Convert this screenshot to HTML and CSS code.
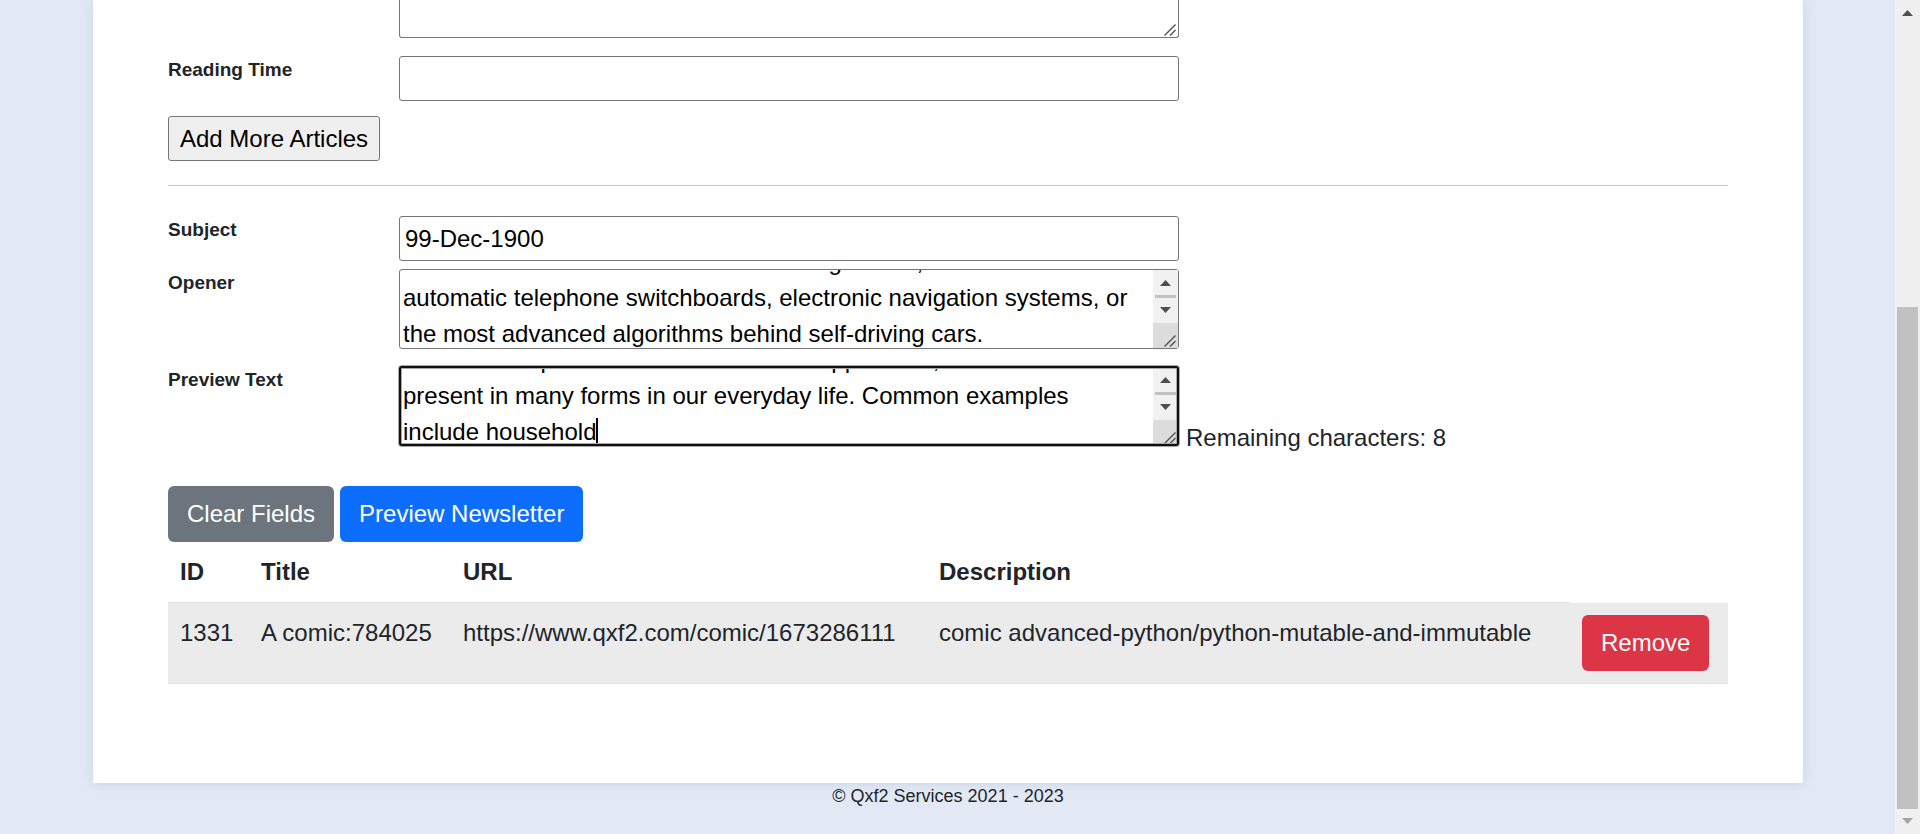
FILE: index.html
```html
<!DOCTYPE html>
<html lang="en">
<head>
<meta charset="utf-8">
<title>Newsletter Generator</title>
<link rel="stylesheet" href="styles.css">
</head>
<body>
<svg class="defs" aria-hidden="true">
  <symbol id="grip" viewBox="0 0 12 12"><path d="M0.5 11.5 11.5 0.5M6 11.5 11.5 6" fill="none" stroke="#505050" stroke-width="1.4"/></symbol>
  <symbol id="bar" viewBox="0 0 25 78">
    <path fill="#f1f1f1" d="M0 0h25v53H0z"/>
    <path fill="#dcdcdc" d="M0 53h25v25H0z"/>
    <path fill="#505050" d="M12.5 10 18 16H7zM7 37h11l-5.500 6z"/>
    <path fill="#c1c1c1" d="M2 25h21v3H2z"/>
    <path d="M11.500 76.500 22.500 65.500M17 76.500 22.500 71" fill="none" stroke="#505050" stroke-width="1.4"/>
  </symbol>
</svg>
<div class="page">
  <main class="card">
    <form>
      <div class="row row-first">
        <span class="label"></span>
        <div class="control">
          <textarea class="field field-cut" aria-label="Description"></textarea>
          <svg class="grip"><use href="#grip"/></svg>
        </div>
      </div>
      <div class="row row-reading">
        <label class="label" for="reading">Reading Time</label>
        <div class="control"><input class="field" type="text" id="reading"></div>
      </div>
      <button class="add" type="button">Add More Articles</button>
      <hr class="rule">
      <div class="row row-subject">
        <label class="label" for="subject">Subject</label>
        <div class="control"><input class="field" type="text" id="subject" value="99-Dec-1900"></div>
      </div>
      <div class="row row-opener">
        <label class="label" for="opener">Opener</label>
        <div class="control">
          <textarea class="field area" id="opener" data-rest="7">Common examples
include all household items such as refrigerators, thermostats and automatic telephone switchboards, electronic navigation systems, or the most advanced algorithms behind self-driving cars.</textarea>
          <svg class="bar"><use href="#bar"/></svg>
        </div>
      </div>
      <div class="row row-preview">
        <label class="label" for="preview">Preview Text</label>
        <div class="control">
          <textarea class="field area area-active" id="preview" data-rest="8">Automation
Besides computers and the household appliances, automation is present in many forms in our everyday life. Common examples include household</textarea>
          <svg class="bar"><use href="#bar"/></svg>
          <span class="caret"></span>
          <span class="ring"></span>
        </div>
        <span class="counter">Remaining characters: 8</span>
      </div>
      <div class="actions">
        <button class="btn btn-clear" type="button">Clear Fields</button>
        <button class="btn btn-preview" type="button">Preview Newsletter</button>
      </div>
    </form>
    <table class="articles">
      <colgroup><col class="c-id"><col class="c-title"><col class="c-url"><col class="c-desc"><col></colgroup>
      <thead>
        <tr><th>ID</th><th>Title</th><th>URL</th><th>Description</th></tr>
      </thead>
      <tbody>
        <tr>
          <td>1331</td><td>A comic:784025</td><td>https://www.qxf2.com/comic/1673286111</td>
          <td>comic advanced-python/python-mutable-and-immutable</td>
          <td><button class="btn btn-remove" type="button">Remove</button></td>
        </tr>
      </tbody>
    </table>
  </main>
  <footer class="footer">© Qxf2 Services 2021 - 2023</footer>
</div>
<div class="scroll" aria-hidden="true">
  <svg class="arrow" viewBox="0 0 11 6"><path fill="#505050" d="M5.500 0 11 6H0z"/></svg>
  <div class="track"><div class="thumb"></div></div>
  <svg class="arrow" viewBox="0 0 11 6"><path fill="#a3a3a3" d="M0 0h11L5.500 6z"/></svg>
</div>
<script src="script.js"></script>
</body>
</html>
```
FILE: styles.css
```css
* { box-sizing: border-box; }

body {
  margin: 0;
  display: flex;
  height: 100vh;
  overflow: hidden;
  background: #e2e9f4;
  color: #212529;
  font: 24px/36px "Liberation Sans", Arial, sans-serif;
}

.defs { position: absolute; width: 0; height: 0; }

.page { flex: 1; min-width: 0; padding: 0 92px 0 93px; }

.card {
  padding: 0 75px 99px;
  background: #fff;
  box-shadow: 0 0 10px rgba(130, 155, 205, 0.3);
}

.row { display: flex; align-items: flex-start; }
.row-reading { margin: 18px 0 15px; }
.row-subject { margin-bottom: 8px; }
.row-opener { margin-bottom: 17px; }
.row-preview { min-height: 90px; margin-bottom: 30px; }

.label {
  flex: 0 0 231px;
  font-size: 19px;
  line-height: 28px;
  font-weight: bold;
}

.control { position: relative; flex: 0 0 50%; display: flex; }

.field {
  width: 100%;
  height: 45px;
  margin: 0;
  padding: 2px 5px;
  border: 1px solid #767676;
  border-radius: 3px;
  background: #fff;
  color: #000;
  font: inherit;
  resize: none;
}
.field-cut { height: 38px; border-top: 0; border-radius: 0 0 3px 3px; overflow: hidden; }
.area { height: 80px; padding: 3px 28px 3px 3px; overflow: hidden; }
.area-active { outline: none; }

.bar { position: absolute; top: 1px; right: 1px; width: 25px; height: 78px; }
.grip { position: absolute; right: 3px; bottom: 2px; width: 12px; height: 12px; }
.ring {
  position: absolute;
  inset: 0;
  border: 2px solid #101010;
  border-radius: 3px;
  box-shadow: 0 0 0 1px #a8a8a8, inset 0 0 0 1px #a8a8a8;
  pointer-events: none;
}
.caret { position: absolute; left: 197px; top: 52px; width: 2px; height: 26px; background: #000; }

.counter { align-self: flex-end; margin-left: 7px; }

.add {
  display: block;
  height: 45px;
  padding: 0 11px;
  border: 1px solid #767676;
  border-radius: 3px;
  background: #efefef;
  color: #000;
  font: inherit;
}

.rule { height: 1px; margin: 24px 0 30px; border: 0; background: #c8c9ca; }

.actions { display: flex; gap: 6px; }

.btn {
  display: block;
  height: 56px;
  padding: 0 19px;
  border: 0;
  border-radius: 6px;
  color: #fff;
  font: inherit;
}
.btn-clear { background: #6c757d; }
.btn-preview { background: #0d6efd; }
.btn-remove { background: #dc3545; }

.articles { width: 100%; table-layout: fixed; border-collapse: separate; border-spacing: 0; }
.c-id { width: 81px; }
.c-title { width: 202px; }
.c-url { width: 476px; }
.c-desc { width: 643px; }
.articles th,
.articles td {
  padding: 12px;
  border-bottom: 1px solid #dee2e6;
  text-align: left;
  vertical-align: top;
  white-space: nowrap;
}
.articles td { background: #ebebeb; }

.footer { font-size: 18px; line-height: 27px; text-align: center; }

.scroll {
  flex: 0 0 25px;
  display: flex;
  flex-direction: column;
  align-items: center;
  padding: 10px 2px;
  background: #f0f0f0;
}
.arrow { flex: none; width: 11px; height: 6px; }
.track { flex: 1; width: 21px; margin: 9px 0; display: flex; align-items: flex-end; }
.thumb { width: 100%; height: 64%; background: #c1c1c1; }
```
FILE: script.js
```js
// Keep the end of each long text in view, short of the bottom by its rest distance.
document.querySelectorAll('.area').forEach(function (area) {
  area.scrollTop = area.scrollHeight - area.clientHeight - Number(area.dataset.rest);
});
```
